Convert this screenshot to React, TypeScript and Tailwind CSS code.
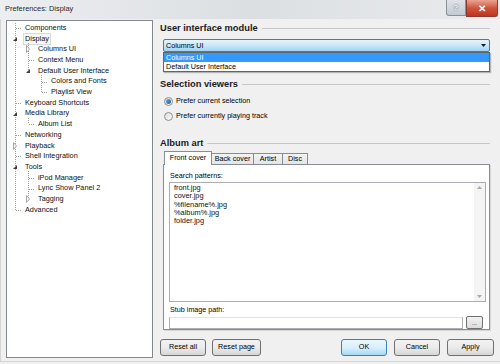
const tree = [
  { label: "Components", level: 0, kind: "leaf" },
  { label: "Display", level: 0, kind: "open" },
  { label: "Columns UI", level: 1, kind: "closed" },
  { label: "Context Menu", level: 1, kind: "leaf" },
  { label: "Default User Interface", level: 1, kind: "open" },
  { label: "Colors and Fonts", level: 2, kind: "leaf" },
  { label: "Playlist View", level: 2, kind: "leaf" },
  { label: "Keyboard Shortcuts", level: 0, kind: "leaf" },
  { label: "Media Library", level: 0, kind: "open" },
  { label: "Album List", level: 1, kind: "leaf" },
  { label: "Networking", level: 0, kind: "leaf" },
  { label: "Playback", level: 0, kind: "closed" },
  { label: "Shell Integration", level: 0, kind: "leaf" },
  { label: "Tools", level: 0, kind: "open" },
  { label: "iPod Manager", level: 1, kind: "leaf" },
  { label: "Lync Show Panel 2", level: 1, kind: "leaf" },
  { label: "Tagging", level: 1, kind: "closed" },
  { label: "Advanced", level: 0, kind: "leaf" },
];

const ROW = 10.7;
const lineX = [8, 21, 34];
const cy = (i: number) => 7 + ROW * i;

// vertical connector runs: [level, fromRow, toRow]
const runs: [number, number, number][] = [
  [1, 1, 4],
  [2, 4, 6],
  [1, 8, 9],
  [1, 13, 16],
];

function TreeLines() {
  return (
    <svg className="pointer-events-none absolute left-0 top-0" width="145" height="336">
      <g stroke="#a0a0a0" strokeWidth="1" strokeDasharray="1 1" shapeRendering="crispEdges">
        <line x1={8.5} y1={2} x2={8.5} y2={cy(17)} />
        {runs.map(([lvl, a, b], i) => (
          <line key={i} x1={lineX[lvl] + 0.5} y1={cy(a) + 4} x2={lineX[lvl] + 0.5} y2={cy(b)} />
        ))}
        {tree.map((t, i) =>
          t.kind === "leaf" ? (
            <line key={i} x1={lineX[t.level] + 1} y1={Math.round(cy(i)) + 0.5} x2={lineX[t.level] + 7} y2={Math.round(cy(i)) + 0.5} />
          ) : null
        )}
      </g>
      {tree.map((t, i) => {
        const x = lineX[t.level];
        const y = Math.round(cy(i));
        if (t.kind === "open")
          return <path key={i} d={`M${x + 2} ${y + 2} L${x + 2} ${y - 2} L${x - 2} ${y + 2} Z`} fill="#404040" />;
        if (t.kind === "closed")
          return <path key={i} d={`M${x - 1.5} ${y - 3.5} L${x + 1.5} ${y} L${x - 1.5} ${y + 3.5} Z`} fill="#fff" stroke="#a6a6a6" strokeWidth="1" />;
        return null;
      })}
    </svg>
  );
}

function Heading({ text }: { text: string }) {
  return (
    <div className="flex h-[12px] items-center">
      <span className="text-[9.3px] font-bold leading-[12px] text-[#1b1b1b]">{text}</span>
      <div className="ml-[4px] mr-[7px] h-px flex-1 bg-[#c6c6c6]" />
    </div>
  );
}

function Radio({ checked, label }: { checked?: boolean; label: string }) {
  return (
    <div className="flex h-[10px] items-center pl-[4px]">
      <span className="flex h-[9px] w-[9px] items-center justify-center rounded-full border border-[#8e8f8f] bg-gradient-to-br from-[#dcdcdc] to-[#fbfbfb]">
        {checked && <span className="h-[5px] w-[5px] rounded-full bg-gradient-to-br from-[#6ea8d8] to-[#1b5e95]" />}
      </span>
      <span className="ml-[3px] text-[7.2px] leading-[10px]">{label}</span>
    </div>
  );
}

function Button({ label, w, primary }: { label: string; w: string; primary?: boolean }) {
  return (
    <div
      className={`flex h-[17px] items-center justify-center rounded-[3px] border text-[7.2px] ${w} ${
        primary
          ? "border-[#3c7fb1] bg-gradient-to-b from-[#eaf6fd] via-[#d9f0fc] to-[#a7d9f5]"
          : "border-[#707070] bg-gradient-to-b from-[#f2f2f2] via-[#ebebeb] to-[#d6d6d6]"
      }`}
    >
      {label}
    </div>
  );
}

export default function App() {
  return (
    <div className="relative h-[364px] w-[500px] overflow-hidden bg-[#f0f0f0] font-['Liberation_Sans',Arial,sans-serif] text-black antialiased">
      {/* title bar */}
      <div className="flex h-[19px] items-start justify-between bg-gradient-to-r from-[#eceef0] via-[#dcdfe2] to-[#e9ebed]">
        <span className="ml-[5px] mt-[4px] text-[7.4px] leading-[10px] text-[#2a2a2a]">Preferences: Display</span>
        <div className="mr-[2px] flex">
          <div className="flex h-[16px] w-[20px] items-center justify-center rounded-bl-[3px] border border-t-0 border-[#8a9099] bg-gradient-to-b from-[#dfe3e8] to-[#c4cbd3] text-[8px] font-bold text-white [text-shadow:0_0_2px_#333]">
            ?
          </div>
          <div className="flex h-[17px] w-[32px] items-center justify-center rounded-br-[3px] border border-t-0 border-[#8a3a33] bg-gradient-to-b from-[#e8a493] via-[#d0533d] to-[#c0341f] text-[10px] font-bold text-white">
            ✕
          </div>
        </div>
      </div>

      {/* body */}
      <div className="flex h-[343px] border-b border-l border-[#d4d4d4] pl-[5px] pt-[1px]">
        {/* tree */}
        <div className="relative h-[338px] w-[147px] border border-[#828790] bg-white">
          <TreeLines />
          <div className="pt-[1.65px]">
            {tree.map((t, i) => (
              <div
                key={t.label}
                className={`flex h-[10.7px] items-center ${t.level === 0 ? "pl-[16px]" : t.level === 1 ? "pl-[29px]" : "pl-[42px]"}`}
              >
                <span
                  className={`whitespace-nowrap px-px text-[7.3px] leading-[10px] text-[#111] ${
                    i === 1 ? "border border-[#d9d9d9] bg-[#f7f7f7]" : "border border-transparent"
                  }`}
                >
                  {t.label}
                </span>
              </div>
            ))}
          </div>
        </div>

        {/* right pane */}
        <div className="ml-[7px] flex w-[337px] flex-col pt-[2px]">
          <Heading text="User interface module" />
          <div className="ml-[3px] mt-[5px] flex h-[13px] w-[327px] items-center justify-between rounded-[2px] border border-[#3c7fb1] bg-gradient-to-b from-[#e6f4fd] via-[#c8e7fa] to-[#9fd3f3] pl-[2px] pr-[3px]">
            <span className="text-[7.2px] leading-[10px]">Columns UI</span>
            <svg width="5" height="3" viewBox="0 0 5 3">
              <path d="M0 0 H5 L2.5 3 Z" fill="#1a1a1a" />
            </svg>
          </div>

          <div className="mt-[26px]">
            <Heading text="Selection viewers" />
          </div>
          <div className="mt-[6px] flex flex-col gap-[5px]">
            <Radio checked label="Prefer current selection" />
            <Radio label="Prefer currently playing track" />
          </div>

          <div className="mt-[16px]">
            <Heading text="Album art" />
          </div>

          {/* tabs */}
          <div className="ml-[4px] mt-[2px] flex h-[14px] items-end">
            <div className="relative z-10 flex h-[14px] w-[48px] items-center justify-center border border-b-0 border-[#898c95] bg-white text-[7.2px]">
              Front cover
            </div>
            <div className="flex h-[12px] w-[42px] items-center justify-center border border-l-0 border-b-0 border-[#898c95] bg-gradient-to-b from-[#f3f3f3] to-[#e3e3e3] text-[7.2px]">
              Back cover
            </div>
            <div className="flex h-[12px] w-[29px] items-center justify-center border border-l-0 border-b-0 border-[#898c95] bg-gradient-to-b from-[#f3f3f3] to-[#e3e3e3] text-[7.2px]">
              Artist
            </div>
            <div className="flex h-[12px] w-[25px] items-center justify-center border border-l-0 border-b-0 border-[#898c95] bg-gradient-to-b from-[#f3f3f3] to-[#e3e3e3] text-[7.2px]">
              Disc
            </div>
          </div>
          <div className="-mt-px ml-[3px] flex h-[166px] w-[327px] flex-col border border-[#898c95] bg-white pl-[5px] shadow-[1px_1px_0_#d5d5d5]">
            <span className="mt-[6px] pl-px text-[7.2px] leading-[10px]">Search patterns:</span>
            <div className="mt-px flex h-[121px] w-[317px] border border-[#abadb3] bg-white">
              <div className="flex-1 pl-[4px] pt-[1px] text-[7.4px] leading-[8.3px] text-[#111]">
                <div>front.jpg</div>
                <div>cover.jpg</div>
                <div>%filename%.jpg</div>
                <div>%album%.jpg</div>
                <div>folder.jpg</div>
              </div>
              <div className="flex w-[11px] flex-col items-center justify-between bg-[#f4f4f4] py-[3px]">
                <svg width="5" height="3" viewBox="0 0 5 3">
                  <path d="M0 3 L2.5 0 L5 3 Z" fill="#a8a8a8" />
                </svg>
                <svg width="5" height="3" viewBox="0 0 5 3">
                  <path d="M0 0 H5 L2.5 3 Z" fill="#a8a8a8" />
                </svg>
              </div>
            </div>
            <span className="mt-[3px] pl-px text-[7.2px] leading-[10px]">Stub image path:</span>
            <div className="mt-px flex items-center">
              <div className="h-[12px] w-[294px] border border-[#abadb3] border-t-[#e2e3ea] bg-white" />
              <div className="ml-[3px] flex h-[13px] w-[17px] items-center justify-center rounded-[2px] border border-[#707070] bg-gradient-to-b from-[#f2f2f2] to-[#dcdcdc] text-[6px] leading-none">
                ...
              </div>
            </div>
          </div>

          {/* buttons */}
          <div className="mt-[9px] flex pr-[3px]">
            <Button label="Reset all" w="w-[46px]" />
            <div className="ml-[6px]">
              <Button label="Reset page" w="w-[49px]" />
            </div>
            <div className="ml-auto flex gap-[7px]">
              <Button label="OK" w="w-[46px]" primary />
              <Button label="Cancel" w="w-[46px]" />
              <Button label="Apply" w="w-[47px]" />
            </div>
          </div>
        </div>
      </div>

      {/* open dropdown list */}
      <div className="absolute left-[163px] top-[52px] w-[327px] border border-[#646464] bg-white shadow-[1px_1px_1px_rgba(0,0,0,0.25)]">
        <div className="h-[9px] bg-[#3399ff] pl-[2px] text-[7.2px] leading-[9px] text-white">Columns UI</div>
        <div className="h-[9px] pl-[2px] text-[7.2px] leading-[9px]">Default User Interface</div>
      </div>
    </div>
  );
}
